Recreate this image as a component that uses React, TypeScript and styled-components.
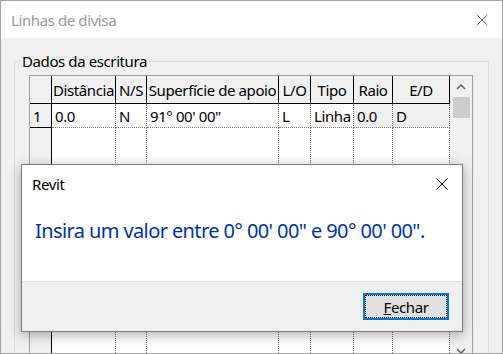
import styled, { createGlobalStyle } from "styled-components";

const GlobalStyle = createGlobalStyle`
  html, body {
    margin: 0;
    padding: 0;
    background: #ffffff;
  }
  body {
    font-family: "Segoe UI", "Noto Sans", "DejaVu Sans", sans-serif;
    letter-spacing: -0.4px;
  }
`;

const columns = [
  { title: "", width: 22 },
  { title: "Distância", width: 64 },
  { title: "N/S", width: 31 },
  { title: "Superfície de apoio", width: 132 },
  { title: "L/O", width: 32 },
  { title: "Tipo", width: 43 },
  { title: "Raio", width: 39 },
  { title: "E/D", width: 57 },
];

const row = ["1", "0.0", "N", "91° 00' 00\"", "L", "Linha", "0.0", "D"];
const readOnly = [false, false, false, false, false, false, true, true];

const Window = styled.div`
  position: relative;
  width: 503px;
  height: 354px;
  box-sizing: border-box;
  border: 1px solid #a3a3a3;
  background: #f0f0f0;
  overflow: hidden;
  display: flex;
  flex-direction: column;
`;

const TitleBar = styled.div`
  height: 37px;
  flex: none;
  background: #ffffff;
  display: flex;
  align-items: center;
  justify-content: space-between;
  padding: 0 14px 0 10px;
  font-size: 15px;
  color: #9a9a9a;
`;

const Body = styled.div`
  flex: 1;
  padding: 13px 13px 0;
`;

const Group = styled.fieldset`
  margin: 0;
  padding: 0;
  min-width: 0;
  border: 1px solid #dcdcdc;
  height: 400px;
`;

const Legend = styled.legend`
  margin-left: 5px;
  padding: 0 2px;
  font-size: 15px;
  line-height: 20px;
  color: #000;
`;

const Grid = styled.div`
  margin: 4px 0 0 14px;
  width: 444px;
  height: 287px;
  box-sizing: border-box;
  border: 1px solid #a0a0a0;
  display: flex;
  background: #ffffff;
`;

const Table = styled.div`
  flex: none;
  width: 420px;
  display: grid;
  grid-template-columns: ${columns.map((c) => `${c.width}px`).join(" ")};
  grid-template-rows: 28px 24px 1fr;
`;

const HeadCell = styled.div`
  box-sizing: border-box;
  background: #f0f0f0;
  border-right: 1px solid #000;
  border-bottom: 1px solid #000;
  font-size: 15px;
  color: #000;
  display: flex;
  align-items: center;
  justify-content: center;
  white-space: nowrap;
  overflow: hidden;
`;

const Cell = styled.div<{ $rowHead?: boolean; $gray?: boolean }>`
  box-sizing: border-box;
  background: ${(p) => (p.$rowHead || p.$gray ? "#f0f0f0" : "#ffffff")};
  border-right: 1px ${(p) => (p.$rowHead ? "solid #000" : "dotted #7a7a7a")};
  border-bottom: 1px ${(p) => (p.$rowHead ? "solid #000" : "dotted #7a7a7a")};
  padding-left: 3px;
  font-size: 15px;
  color: #000;
  display: flex;
  align-items: center;
  white-space: nowrap;
  overflow: hidden;
`;

const Filler = styled.div<{ $rowHead?: boolean }>`
  background: ${(p) => (p.$rowHead ? "#f0f0f0" : "#ffffff")};
  border-right: 1px ${(p) => (p.$rowHead ? "solid #000" : "dotted #7a7a7a")};
`;

const ScrollBar = styled.div`
  flex: 1;
  background: #f0f0f0;
  display: flex;
  flex-direction: column;
  align-items: center;
`;

const ArrowButton = styled.div`
  height: 21px;
  width: 100%;
  flex: none;
  display: flex;
  align-items: center;
  justify-content: center;
`;

const Thumb = styled.div`
  width: 17px;
  height: 21px;
  flex: none;
  background: #cdcdcd;
`;

const Track = styled.div`
  flex: 1;
`;

const Dialog = styled.div`
  position: absolute;
  left: 20px;
  top: 163px;
  width: 442px;
  height: 168px;
  box-sizing: border-box;
  border: 1px solid #7a7a7a;
  background: #ffffff;
  box-shadow: 0 3px 12px rgba(0, 0, 0, 0.32);
  display: flex;
  flex-direction: column;
`;

const DialogHeader = styled.div`
  height: 37px;
  flex: none;
  display: flex;
  align-items: center;
  justify-content: space-between;
  padding: 0 14px 0 10px;
  font-size: 15px;
  color: #000;
`;

const Message = styled.div`
  flex: 1;
  padding: 15px 0 0 13px;
  font-size: 20px;
  line-height: 28px;
  letter-spacing: -0.6px;
  color: #0033aa;
  white-space: nowrap;
`;

const Footer = styled.div`
  height: 49px;
  flex: none;
  border-top: 1px solid #dfdfdf;
  background: #f0f0f0;
  display: flex;
  align-items: center;
  justify-content: flex-end;
  padding-right: 13px;
`;

const Button = styled.button`
  width: 86px;
  height: 27px;
  box-sizing: border-box;
  border: 2px solid #0078d7;
  background: #e1e1e1;
  outline: 1px dotted #000;
  outline-offset: -3px;
  font-family: inherit;
  font-size: 15px;
  letter-spacing: inherit;
  color: #000;
  padding: 0;
  display: flex;
  align-items: center;
  justify-content: center;
`;

function CloseIcon({ color }: { color: string }) {
  return (
    <svg width="12" height="12" viewBox="0 0 12 12">
      <path d="M0.5 0.5 L11.5 11.5 M11.5 0.5 L0.5 11.5" stroke={color} strokeWidth="1" fill="none" />
    </svg>
  );
}

function Chevron({ up }: { up?: boolean }) {
  return (
    <svg width="10" height="6" viewBox="0 0 10 6">
      <polyline
        points={up ? "1,5 5,1 9,5" : "1,1 5,5 9,1"}
        stroke="#606060"
        strokeWidth="1.5"
        fill="none"
      />
    </svg>
  );
}

export default function App() {
  return (
    <>
      <GlobalStyle />
      <Window>
        <TitleBar>
          <span>Linhas de divisa</span>
          <CloseIcon color="#7a7a7a" />
        </TitleBar>
        <Body>
          <Group>
            <Legend>Dados da escritura</Legend>
            <Grid>
              <Table>
                {columns.map((c, i) => (
                  <HeadCell key={`h${i}`}>{c.title}</HeadCell>
                ))}
                {row.map((v, i) => (
                  <Cell key={`c${i}`} $rowHead={i === 0} $gray={readOnly[i]}>
                    {v}
                  </Cell>
                ))}
                {columns.map((_, i) => (
                  <Filler key={`f${i}`} $rowHead={i === 0} />
                ))}
              </Table>
              <ScrollBar>
                <ArrowButton>
                  <Chevron up />
                </ArrowButton>
                <Thumb />
                <Track />
                <ArrowButton>
                  <Chevron />
                </ArrowButton>
              </ScrollBar>
            </Grid>
          </Group>
        </Body>
        <Dialog>
          <DialogHeader>
            <span>Revit</span>
            <CloseIcon color="#000" />
          </DialogHeader>
          <Message>Insira um valor entre 0° 00' 00" e 90° 00' 00".</Message>
          <Footer>
            <Button>
              <u>F</u>echar
            </Button>
          </Footer>
        </Dialog>
      </Window>
    </>
  );
}
